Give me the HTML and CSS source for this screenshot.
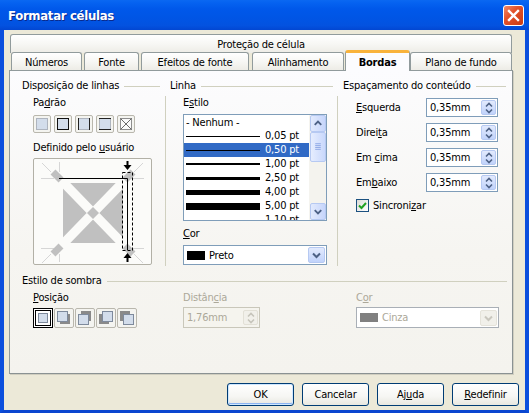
FILE: index.html
```html
<!DOCTYPE html>
<html lang="pt">
<head>
<meta charset="utf-8">
<title>Formatar células</title>
<link rel="stylesheet" href="styles.css">
</head>
<body>
<div class="window">
  <div class="titlebar">
    <span class="title">Formatar células</span>
    <span class="close"><svg width="19" height="19" viewBox="0 0 19 19"><path d="M5 5L14 14M14 5L5 14" stroke="#fff" stroke-width="2.4" stroke-linecap="square"/></svg></span>
  </div>
  <div class="client">
    <div class="tabs">
      <div class="tabrow1"><div class="tab tab-wide">Proteção de célula</div></div>
      <div class="tabrow2">
        <div class="tab t-num">Números</div>
        <div class="tab t-fonte">Fonte</div>
        <div class="tab t-efeitos">Efeitos de fonte</div>
        <div class="tab t-alin">Alinhamento</div>
        <div class="tab tab-active t-bordas">Bordas</div>
        <div class="tab t-plano">Plano de fundo</div>
      </div>
    </div>

    <div class="panel">
      <div class="cols">
        <div class="col">
          <div class="head h1"><span>Disposição de linhas</span></div>
          <div class="body b1">
            <div class="lbl">Pa<u>d</u>rão</div>
            <div class="presets">
              <svg width="18" height="18" viewBox="0 0 18 18"><rect x=".5" y=".5" width="17" height="17" rx="1.5" fill="#F4F4F0" stroke="#B9B7AD"/><rect x="3.5" y="3.5" width="11" height="11" fill="#D3DDEB" stroke="#AEB4BE"/></svg>
              <svg width="18" height="18" viewBox="0 0 18 18"><rect x=".5" y=".5" width="17" height="17" rx="1.5" fill="#F4F4F0" stroke="#B9B7AD"/><rect x="3.5" y="3.5" width="11" height="11" fill="#D3DDEB" stroke="#111"/></svg>
              <svg width="18" height="18" viewBox="0 0 18 18"><rect x=".5" y=".5" width="17" height="17" rx="1.5" fill="#F4F4F0" stroke="#B9B7AD"/><rect x="3.5" y="3.5" width="11" height="11" fill="#D3DDEB" stroke="#AEB4BE"/><path d="M3.5 3v12M14.5 3v12" stroke="#222"/></svg>
              <svg width="18" height="18" viewBox="0 0 18 18"><rect x=".5" y=".5" width="17" height="17" rx="1.5" fill="#F4F4F0" stroke="#B9B7AD"/><rect x="3.5" y="3.5" width="11" height="11" fill="#D3DDEB" stroke="#AEB4BE"/><path d="M3 3.5h12M3 14.5h12" stroke="#222"/></svg>
              <svg width="18" height="18" viewBox="0 0 18 18"><rect x=".5" y=".5" width="17" height="17" rx="1.5" fill="#F4F4F0" stroke="#B9B7AD"/><rect x="3.5" y="3.5" width="11" height="11" fill="#FAFAFA" stroke="#8E8E8E"/><path d="M3.5 3.5l11 11M14.5 3.5l-11 11" stroke="#6A6A6A"/></svg>
            </div>
            <div class="lbl lbl-user">Definido pelo <u>u</u>suário</div>
            <div class="userbox">
              <svg width="119" height="107" viewBox="0 0 119 107">
                <rect x=".5" y=".5" width="118" height="106" rx="1.5" fill="#FBFBF9" stroke="#B2B0A6"/>
                <g stroke="#D6D6D6" stroke-width="1" fill="none">
                  <path d="M8 20.5h13M98 20.5h13M8 90.5h13M98 90.5h13"/>
                  <path d="M26.5 4v10M26.5 96v8"/>
                  <path d="M9 5l9 9M110 5l-9 9M9 105l9-9M110 105l-9-9"/>
                </g>
                <rect x="30" y="25" width="60" height="60" fill="#C0C0C0"/>
                <g stroke="#C0C0C0" stroke-width="7" stroke-linecap="butt">
                  <path d="M20 14l10 10M100 14l-10 10M20 96l10-10M100 96l-10-10"/>
                </g>
                <g stroke="#FBFBF9" stroke-width="9">
                  <path d="M28 22l64 66M92 22l-64 66"/>
                </g>
                <polygon points="60,49 66,55 60,61 54,55" fill="#C0C0C0"/>
                <path d="M26 20.5H94.5V92" stroke="#000" stroke-width="1" fill="none"/>
                <rect x="89.5" y="14.5" width="10" height="78" fill="none" stroke="#000" stroke-dasharray="3 2"/>
                <path d="M94.5 3v4" stroke="#000" stroke-width="2"/>
                <polygon points="90.5,7 98.5,7 94.5,12" fill="#000"/>
                <path d="M94.5 104v-4" stroke="#000" stroke-width="2"/>
                <polygon points="90.5,100 98.5,100 94.5,95" fill="#000"/>
              </svg>
            </div>
          </div>
        </div>

        <div class="col">
          <div class="head h2"><span>Linha</span></div>
          <div class="body b2">
            <div class="lbl">E<u>s</u>tilo</div>
            <div class="listbox">
              <div class="items">
                <div class="item"><span class="none">- Nenhum -</span></div>
                <div class="item"><span class="sample s1"></span><span class="pt">0,05 pt</span></div>
                <div class="item sel"><span class="sample s1"></span><span class="pt">0,50 pt</span></div>
                <div class="item"><span class="sample s2"></span><span class="pt">1,00 pt</span></div>
                <div class="item"><span class="sample s3"></span><span class="pt">2,50 pt</span></div>
                <div class="item"><span class="sample s4"></span><span class="pt">4,00 pt</span></div>
                <div class="item"><span class="sample s5"></span><span class="pt">5,00 pt</span></div>
                <div class="item"><span class="sample s0"></span><span class="pt">1,10 pt</span></div>
              </div>
              <div class="vscroll">
                <div class="sbtn"><svg width="15" height="15" viewBox="0 0 15 15"><path d="M4 9l3.5-3.5L11 9" stroke="#4D6185" stroke-width="2" fill="none"/></svg></div>
                <div class="thumb"><svg width="15" height="28" viewBox="0 0 15 28"><path d="M4.5 10.5h6M4.5 12.5h6M4.5 14.5h6M4.5 16.5h6" stroke="#8CA6E4"/></svg></div>
                <div class="track"></div>
                <div class="sbtn"><svg width="15" height="15" viewBox="0 0 15 15"><path d="M4 6l3.5 3.5L11 6" stroke="#4D6185" stroke-width="2" fill="none"/></svg></div>
              </div>
            </div>
            <div class="lbl lbl-cor"><u>C</u>or</div>
            <div class="combo">
              <span class="swatch"></span><span class="ctext">Preto</span>
              <span class="dbtn"><svg width="15" height="16" viewBox="0 0 15 16"><path d="M4 6.5l3.5 3.5L11 6.5" stroke="#4D6185" stroke-width="2" fill="none"/></svg></span>
            </div>
          </div>
        </div>

        <div class="col">
          <div class="head h3"><span>Espaçamento do conteúdo</span></div>
          <div class="body b3">
            <div class="frow"><span class="flbl"><u>E</u>squerda</span><span class="spin"><span class="val">0,35mm</span><span class="sp"><svg width="12" height="14" viewBox="0 0 12 14"><path d="M3 5.5l3-3 3 3M3 8.5l3 3 3-3" stroke="#4D6185" stroke-width="1.6" fill="none"/></svg></span></span></div>
            <div class="frow"><span class="flbl">Direi<u>t</u>a</span><span class="spin"><span class="val">0,35mm</span><span class="sp"><svg width="12" height="14" viewBox="0 0 12 14"><path d="M3 5.5l3-3 3 3M3 8.5l3 3 3-3" stroke="#4D6185" stroke-width="1.6" fill="none"/></svg></span></span></div>
            <div class="frow"><span class="flbl">Em <u>c</u>ima</span><span class="spin"><span class="val">0,35mm</span><span class="sp"><svg width="12" height="14" viewBox="0 0 12 14"><path d="M3 5.5l3-3 3 3M3 8.5l3 3 3-3" stroke="#4D6185" stroke-width="1.6" fill="none"/></svg></span></span></div>
            <div class="frow"><span class="flbl">Em<u>b</u>aixo</span><span class="spin"><span class="val">0,35mm</span><span class="sp"><svg width="12" height="14" viewBox="0 0 12 14"><path d="M3 5.5l3-3 3 3M3 8.5l3 3 3-3" stroke="#4D6185" stroke-width="1.6" fill="none"/></svg></span></span></div>
            <div class="check"><span class="cbox"><svg width="11" height="11" viewBox="0 0 11 11"><path d="M2 5.5l2.5 2.5L9 3" stroke="#21A121" stroke-width="2" fill="none"/></svg></span><span>Sincroni<u>z</u>ar</span></div>
          </div>
        </div>
      </div>

      <div class="head hshadow"><span>Estilo de sombra</span></div>
      <div class="cols shadow">
        <div class="scol s-c1">
          <div class="lbl"><u>P</u>osição</div>
          <div class="shadows">
            <svg width="20" height="20" viewBox="0 0 20 20"><rect x=".5" y=".5" width="19" height="19" fill="#fff" stroke="#000"/><rect x="2.5" y="2.5" width="15" height="15" fill="#fff" stroke="#000"/><rect x="5.5" y="5.5" width="9" height="9" fill="#D3DDEB" stroke="#7E8A9C"/></svg>
            <svg width="20" height="20" viewBox="0 0 20 20"><rect x=".5" y=".5" width="19" height="19" rx="1.5" fill="#F4F4F0" stroke="#B9B7AD"/><rect x="6" y="6" width="10" height="10" fill="#8A8A8A"/><rect x="3.5" y="3.5" width="10" height="10" fill="#D3DDEB" stroke="#7E8A9C"/></svg>
            <svg width="20" height="20" viewBox="0 0 20 20"><rect x=".5" y=".5" width="19" height="19" rx="1.5" fill="#F4F4F0" stroke="#B9B7AD"/><rect x="6" y="3" width="10" height="10" fill="#8A8A8A"/><rect x="3.5" y="6.5" width="10" height="10" fill="#D3DDEB" stroke="#7E8A9C"/></svg>
            <svg width="20" height="20" viewBox="0 0 20 20"><rect x=".5" y=".5" width="19" height="19" rx="1.5" fill="#F4F4F0" stroke="#B9B7AD"/><rect x="3" y="6" width="10" height="10" fill="#8A8A8A"/><rect x="6.5" y="3.5" width="10" height="10" fill="#D3DDEB" stroke="#7E8A9C"/></svg>
            <svg width="20" height="20" viewBox="0 0 20 20"><rect x=".5" y=".5" width="19" height="19" rx="1.5" fill="#F4F4F0" stroke="#B9B7AD"/><rect x="3" y="3" width="10" height="10" fill="#8A8A8A"/><rect x="6.5" y="6.5" width="10" height="10" fill="#D3DDEB" stroke="#7E8A9C"/></svg>
          </div>
        </div>
        <div class="scol s-c2">
          <div class="lbl dis">Distân<u>c</u>ia</div>
          <div class="spin dspin"><span class="val">1,76mm</span><span class="sp dsp"><svg width="12" height="14" viewBox="0 0 12 14"><path d="M3 5.5l3-3 3 3M3 8.5l3 3 3-3" stroke="#C6C4BA" stroke-width="1.6" fill="none"/></svg></span></div>
        </div>
        <div class="scol s-c3">
          <div class="lbl dis">C<u>o</u>r</div>
          <div class="combo dcombo">
            <span class="swatch gray"></span><span class="ctext">Cinza</span>
            <span class="dbtn ddbtn"><svg width="15" height="16" viewBox="0 0 15 16"><path d="M4 6.5l3.5 3.5L11 6.5" stroke="#C9C7BE" stroke-width="2" fill="none"/></svg></span>
          </div>
        </div>
      </div>
    </div>

    <div class="buttons">
      <button class="btn default">OK</button>
      <button class="btn">Cancelar</button>
      <button class="btn">Aj<u>u</u>da</button>
      <button class="btn"><u>R</u>edefinir</button>
    </div>
  </div>
</div>
</body>
</html>
```

FILE: styles.css
```css
* { box-sizing: border-box; }
html, body { margin: 0; padding: 0; background: #ECE9D8; }
body {
  font-family: "DejaVu Sans", "Liberation Sans", sans-serif;
  font-stretch: condensed;
  font-size: 11px;
  letter-spacing: -0.2px;
  color: #000;
}
u { text-decoration: underline; text-underline-offset: 1px; }

.window {
  width: 529px;
  height: 413px;
  display: flex;
  flex-direction: column;
  background: #ECE9D8;
  overflow: hidden;
}

.titlebar {
  flex: none;
  height: 30px;
  display: flex;
  align-items: center;
  padding: 0 5px 0 8px;
  background: linear-gradient(to bottom, #0A68F2 0%, #0562F0 10%, #0058EA 30%, #0055E5 60%, #0352E0 85%, #0247D2 100%);
}
.title {
  flex: 1;
  color: #fff;
  font-family: "DejaVu Sans", sans-serif;
  font-stretch: condensed;
  font-weight: bold;
  font-size: 13px;
  letter-spacing: -0.3px;
  text-shadow: 1px 1px 0 #0A2A8C;
}
.close {
  width: 21px;
  height: 21px;
  border: 1px solid #fff;
  border-radius: 3px;
  background: linear-gradient(135deg, #F08A6B 0%, #E2522B 40%, #CC3A10 100%);
  display: flex;
  align-items: center;
  justify-content: center;
}

.client {
  flex: 1;
  display: flex;
  flex-direction: column;
  border-left: 4px solid #0B4FDD;
  border-right: 4px solid #0B4FDD;
  border-bottom: 3px solid #0A46D0;
  padding: 4px 6px 0 5px;
}

.tabs { width: 504px; }
.tabrow1 { height: 18px; display: flex; }
.tabrow2 { height: 18px; display: flex; align-items: flex-end; }
.tab {
  height: 18px;
  border: 1px solid #919B9C;
  border-bottom: none;
  border-radius: 3px 3px 0 0;
  background: linear-gradient(to bottom, #FFFFFF 0%, #F7F7F4 50%, #EDECE6 100%);
  display: flex;
  align-items: center;
  justify-content: center;
  white-space: nowrap;
  padding-top: 1px;
}
.tab-wide { width: 502px; margin-left: 1px; height: 19px; }
.t-num { width: 71px; margin-left: 2px; }
.t-fonte { width: 55px; margin-left: 2px; }
.t-efeitos { width: 108px; margin-left: 2px; }
.t-alin { width: 92px; margin-left: 3px; }
.t-bordas { width: 65px; margin-left: 1px; }
.t-plano { width: 102px; margin-left: 0; }
.tab-active {
  position: relative;
  z-index: 2;
  height: 21px;
  margin-bottom: -1px;
  border-top: 3px solid #F9B33B;
  background: #FCFCFE;
  font-weight: bold;
  padding-top: 0;
}

.panel {
  width: 504px;
  height: 304px;
  border: 1px solid #919B9C;
  border-right-color: #8A9293;
  border-bottom-color: #8A9293;
  box-shadow: 1px 1px 0 #D0CEC0;
  background: linear-gradient(to bottom, #FCFCFE 0%, #F6F5F1 60%, #F4F3EE 100%);
  padding: 8px 6px 0 12px;
}

.cols {
  display: grid;
  grid-template-columns: 143px 172px 1fr;
}
.head {
  height: 13px;
  display: flex;
  align-items: center;
  gap: 5px;
  white-space: nowrap;
}
.head::after {
  content: "";
  flex: 1;
  height: 0;
  border-top: 1px solid #D0D0BF;
  margin-top: 1px;
}
.h1 { padding-right: 5px; }
.h2 { padding: 0 4px 0 5px; }
.h3 { padding: 0 0 0 6px; }

.body { margin-top: 4px; height: 170px; }
.b1 { padding-left: 11px; }
.b2 { border-left: 1px solid #D0D0BF; padding-left: 17px; }
.b3 { border-left: 1px solid #D0D0BF; padding-left: 18px; padding-top: 2px; }

.lbl { height: 13px; line-height: 13px; white-space: nowrap; }
.presets { display: flex; gap: 3px; margin-top: 6px; height: 18px; }
.presets svg { display: block; }
.lbl-user { margin-top: 8px; }
.userbox { margin-top: 4px; width: 119px; height: 107px; }
.userbox svg { display: block; }

/* list box */
.listbox {
  margin-top: 5px;
  width: 144px;
  height: 107px;
  border: 1px solid #7F9DB9;
  background: #fff;
  display: flex;
}
.items { flex: 1; overflow: hidden; }
.item {
  height: 14px;
  display: flex;
  align-items: center;
  padding-left: 2px;
  white-space: nowrap;
}
.item.sel { background: #316AC5; color: #fff; }
.sample { width: 74px; height: 1px; background: #000; margin-right: 5px; flex: none; }
.s0 { background: transparent; }
.s1 { height: 1px; }
.s2 { height: 2px; }
.s3 { height: 3px; }
.s4 { height: 5px; }
.s5 { height: 7px; }
.pt { line-height: 14px; }

.vscroll {
  width: 17px;
  flex: none;
  display: flex;
  flex-direction: column;
  background: #F5F4EF;
  padding: 0 0 0 1px;
}
.sbtn {
  height: 17px;
  border: 1px solid #B6C9F2;
  border-radius: 2px;
  background: linear-gradient(to right, #E2EAFD 0%, #C6D5FB 100%);
  display: flex;
  align-items: center;
  justify-content: center;
}
.thumb {
  height: 30px;
  border: 1px solid #B6C9F2;
  border-radius: 2px;
  background: linear-gradient(to right, #E6EDFE 0%, #C9D8FC 100%);
  display: flex;
  align-items: center;
  justify-content: center;
}
.track { flex: 1; background: #F4F3EE; }

.lbl-cor { margin-top: 6px; }
.combo {
  margin-top: 5px;
  width: 144px;
  height: 20px;
  border: 1px solid #7F9DB9;
  background: #fff;
  display: flex;
  align-items: center;
  padding: 0 1px 0 3px;
}
.swatch { width: 18px; height: 9px; background: #000; flex: none; }
.swatch.gray { background: #808080; }
.ctext { flex: 1; padding-left: 4px; }
.dbtn {
  width: 17px;
  height: 16px;
  border: 1px solid #B6C9F2;
  border-radius: 2px;
  background: linear-gradient(to bottom, #E2EAFD 0%, #C1D3FB 100%);
  display: flex;
  align-items: center;
  justify-content: center;
}

/* spacing column */
.frow { display: flex; align-items: center; height: 19px; margin-bottom: 6px; }
.flbl { width: 70px; white-space: nowrap; }
.spin {
  width: 72px;
  height: 19px;
  border: 1px solid #7F9DB9;
  background: #fff;
  display: flex;
  align-items: center;
  padding: 0 1px 0 3px;
}
.val { flex: 1; }
.sp {
  width: 15px;
  height: 15px;
  border: 1px solid #B6C9F2;
  border-radius: 2px;
  background: linear-gradient(to bottom, #E2EAFD 0%, #C1D3FB 100%);
  display: flex;
  align-items: center;
  justify-content: center;
}
.check { display: flex; align-items: center; gap: 4px; margin-top: 1px; height: 14px; }
.cbox {
  width: 13px;
  height: 13px;
  border: 1px solid #1C5180;
  background: linear-gradient(135deg, #DCDCD7 0%, #FFFFFF 100%);
  display: flex;
  align-items: center;
  justify-content: center;
}

/* shadow section */
.hshadow { margin-top: 8px; margin-right: -1px; }
.shadow { margin-top: 4px; }
.s-c1 { padding-left: 11px; }
.s-c2 { padding-left: 18px; }
.s-c3 { padding-left: 19px; }
.shadows { display: flex; gap: 1px; margin-top: 4px; height: 20px; }
.shadows svg { display: block; }
.dis { color: #ACA899; }
.dspin {
  margin-top: 3px;
  width: 77px;
  height: 21px;
  border-color: #C9C7BA;
  background: #F5F4EE;
  color: #ACA899;
}
.dsp {
  border-color: #E2E0D6;
  background: #F1F0EA;
}
.dcombo {
  margin-top: 3px;
  width: 143px;
  height: 21px;
  border-color: #A9AFB6;
  background: #fff;
  color: #ACA899;
}
.ddbtn {
  border-color: #E5E3DA;
  background: #F1F0EA;
}

/* buttons */
.buttons {
  display: flex;
  justify-content: flex-end;
  gap: 8px;
  margin-top: 9px;
}
.btn {
  width: 67px;
  height: 23px;
  font: inherit;
  font-stretch: condensed;
  letter-spacing: -0.2px;
  color: #000;
  border: 1px solid #003C74;
  border-radius: 3px;
  background: linear-gradient(to bottom, #FFFFFF 0%, #F6F6F3 60%, #E8E7E0 100%);
  padding: 0;
}
.btn.default {
  box-shadow: inset 0 0 0 1px #CEE7FF, inset 0 -1px 0 1px #8CB4F2;
}
```
